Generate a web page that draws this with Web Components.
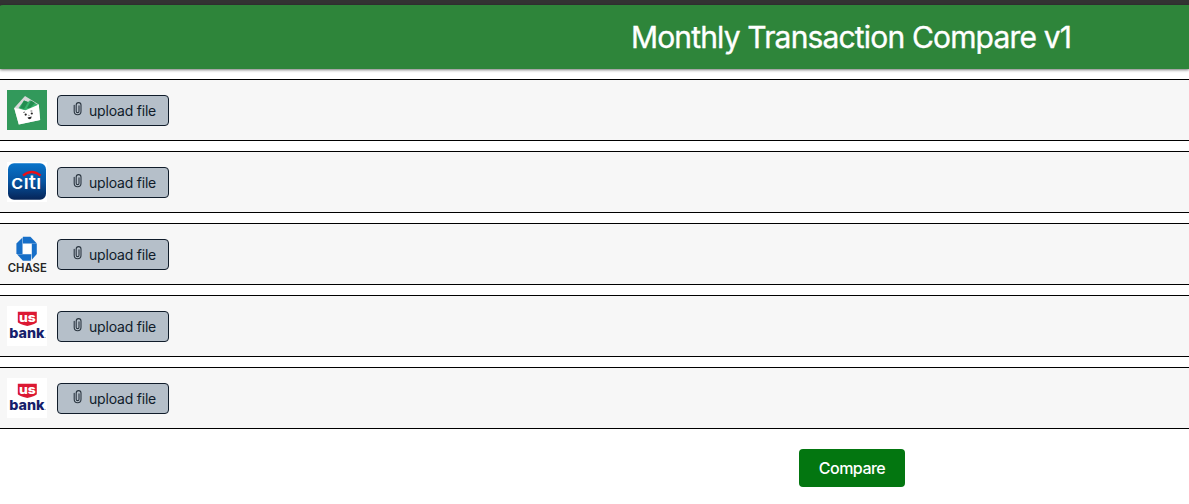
<!DOCTYPE html>
<html lang="en">
<head>
<meta charset="utf-8">
<title>Monthly Transaction Compare v1</title>
<style>
html{background:#fff;overflow:hidden}
body{margin:0;overflow:hidden;font-family:Inter,"Liberation Sans",sans-serif}
</style>
</head>
<body>
<compare-app></compare-app>
<script>
const logos = {
everydollar: `<rect width="40" height="40" fill="#32995b"/>
<path d="M7.2 18 18 6.1 31.8 14.6 33 30 11.8 34.4Z" fill="#d7d9d8"/>
<path d="M11.5 18 17 10.5 21 12 23 10.2 30.5 14.5 30.5 17 18 21Z" fill="#38b36d"/>
<path d="M17 10.5 21 12 17 19 13 18ZM24 10.5 28 13 23 18 20 18Z" fill="#238d50"/>
<path d="M7.2 18 18.5 20.2 31.8 14.6 33.2 30 11.8 34.4Z" fill="#fff"/>
<circle cx="18.7" cy="24.6" r="1.1" fill="#222"/><circle cx="24.8" cy="23.5" r="1.1" fill="#222"/>
<path d="M16.2 22.5 18 22M23.5 21 25.3 21M21.4 25.3 22.5 25.5" stroke="#333" stroke-width=".7"/>
<path d="M20.5 27.5 24.7 26.5Q24.5 29 22.7 29.2 21 29 20.5 27.5Z" fill="#222"/>`,
citi: `<defs><linearGradient id="g" x2="0" y2="1"><stop stop-color="#0874ca"/><stop offset=".5" stop-color="#0754a1"/><stop offset="1" stop-color="#062457"/></linearGradient></defs>
<rect width="40" height="40" fill="#fff"/><rect x="1" y="1.2" width="38" height="36.6" rx="6" fill="url(#g)"/>
<text x="4" y="27" font-family="Inter" font-weight="500" font-size="20" fill="#fff" textLength="30.5" lengthAdjust="spacingAndGlyphs">cıtı</text>
<path d="M16 13.6Q24.8 6.2 33.6 13.6" fill="none" stroke="#e80f18" stroke-width="2.4"/>`,
chase: `<g fill="#176fc8"><path d="M15.9 2.7H23.4L29.4 8.9V9.6H15.9Z"/><path d="M29.8 9.6V20L24.8 25.8V9.6Z"/><path d="M23.8 26.8H15.9L10 20.3H24.4Z"/><path d="M9.4 20V9.4L15.5 3.5V20Z"/></g><path d="M16.2 10.2H24.2V19.7H16.2Z" fill="#fff"/>
<text x=".8" y="37.9" font-family="Inter" font-weight="600" font-size="11.4" fill="#252525" textLength="39" lengthAdjust="spacingAndGlyphs">CHASE</text>`,
usbank: `<rect width="40" height="40" fill="#fff"/>
<path d="M10.8 5.7H29.8V16.3Q29 17.9 20.3 20 11.7 17.9 10.8 16.3Z" fill="#dc1933"/>
<text x="12" y="16.2" font-family="Inter" font-weight="800" font-size="12.8" fill="#fff" textLength="16.8" lengthAdjust="spacingAndGlyphs">us</text>
<text x="2.3" y="32.1" font-family="Inter" font-weight="800" font-size="13.8" fill="#15206b" textLength="35.2" lengthAdjust="spacingAndGlyphs">bank</text><circle cx="38.2" cy="31.5" r=".45" fill="#667"/>`
};
class BankLogo extends HTMLElement {
  connectedCallback(){
    this.attachShadow({mode:"open"}).innerHTML=`<style>:host{display:block;width:40px;height:40px;flex:none}svg{display:block}</style><svg width="40" height="40" viewBox="0 0 40 40">${logos[this.getAttribute("name")]}</svg>`;
  }
}
class UploadButton extends HTMLElement {
  connectedCallback(){
    this.attachShadow({mode:"open"}).innerHTML=`<style>
:host{display:block;flex:none}
button{box-sizing:border-box;display:flex;align-items:center;width:112px;height:31px;margin:0;padding:1px 0 0 15px;border:1px solid #101c2a;border-radius:4px;background:#b5bfc9;color:#101c2a;font:400 14px/20px Inter,"Liberation Sans",sans-serif}
svg{display:block;flex:none;width:10px;height:16px;margin:-4px 6px 0 0}
span{white-space:nowrap;letter-spacing:-.2px}
</style><button><svg viewBox="0 0 10 16" fill="none" stroke="#2a3540" stroke-width="1.1" stroke-linecap="round"><path d="M1.2 4.2V10.3a3.4 3.4 0 0 0 6.8 0V4a2.4 2.4 0 0 0-4.8 0v6.2a1.4 1.4 0 0 0 2.8 0V4.7"/></svg><span><slot></slot></span></button>`;
  }
}
class AccountRow extends HTMLElement {
  connectedCallback(){
    this.attachShadow({mode:"open"}).innerHTML=`<style>:host{box-sizing:border-box;display:flex;align-items:center;gap:10px;height:62px;padding-left:7px;border-top:1px solid #000;border-bottom:1px solid #000;background:#f7f7f7}</style><bank-logo name="${this.getAttribute("bank")}"></bank-logo><upload-button>upload file</upload-button>`;
  }
}
class AppHeader extends HTMLElement {
  connectedCallback(){
    this.attachShadow({mode:"open"}).innerHTML=`<style>
:host{display:block;background:#333;padding-top:5px}
header{height:64px;padding-left:513px;display:flex;align-items:center;justify-content:center;background:#2e853a;border-top-left-radius:3px 1px;box-shadow:0 1px 3px #0008}
h1{margin:0;font:400 30px/40px Inter,"Liberation Sans",sans-serif;color:#fff;white-space:nowrap;letter-spacing:-.83px;-webkit-text-stroke:.35px #fff}
</style><header><h1><slot></slot></h1></header>`;
  }
}
class CompareButton extends HTMLElement {
  connectedCallback(){
    this.attachShadow({mode:"open"}).innerHTML=`<style>:host{display:block}button{display:block;width:106px;height:38px;padding:0;border:0;border-radius:4px;background:#037610;color:#fff;font:500 16px/24px Inter,"Liberation Sans",sans-serif;letter-spacing:-.5px}</style><button><slot></slot></button>`;
  }
}
class CompareApp extends HTMLElement {
  connectedCallback(){
    this.attachShadow({mode:"open"}).innerHTML=`<style>
:host{display:block}
main{display:flex;flex-direction:column;gap:10px;padding-top:10px}
footer{display:flex;justify-content:center;padding:10px 0 0 515px}
</style><app-header>Monthly Transaction Compare v1</app-header><main>
<account-row bank="everydollar"></account-row><account-row bank="citi"></account-row><account-row bank="chase"></account-row><account-row bank="usbank"></account-row><account-row bank="usbank"></account-row>
<footer><compare-button>Compare</compare-button></footer></main>`;
  }
}
customElements.define("bank-logo",BankLogo);
customElements.define("upload-button",UploadButton);
customElements.define("account-row",AccountRow);
customElements.define("app-header",AppHeader);
customElements.define("compare-button",CompareButton);
customElements.define("compare-app",CompareApp);
</script>
</body>
</html>
